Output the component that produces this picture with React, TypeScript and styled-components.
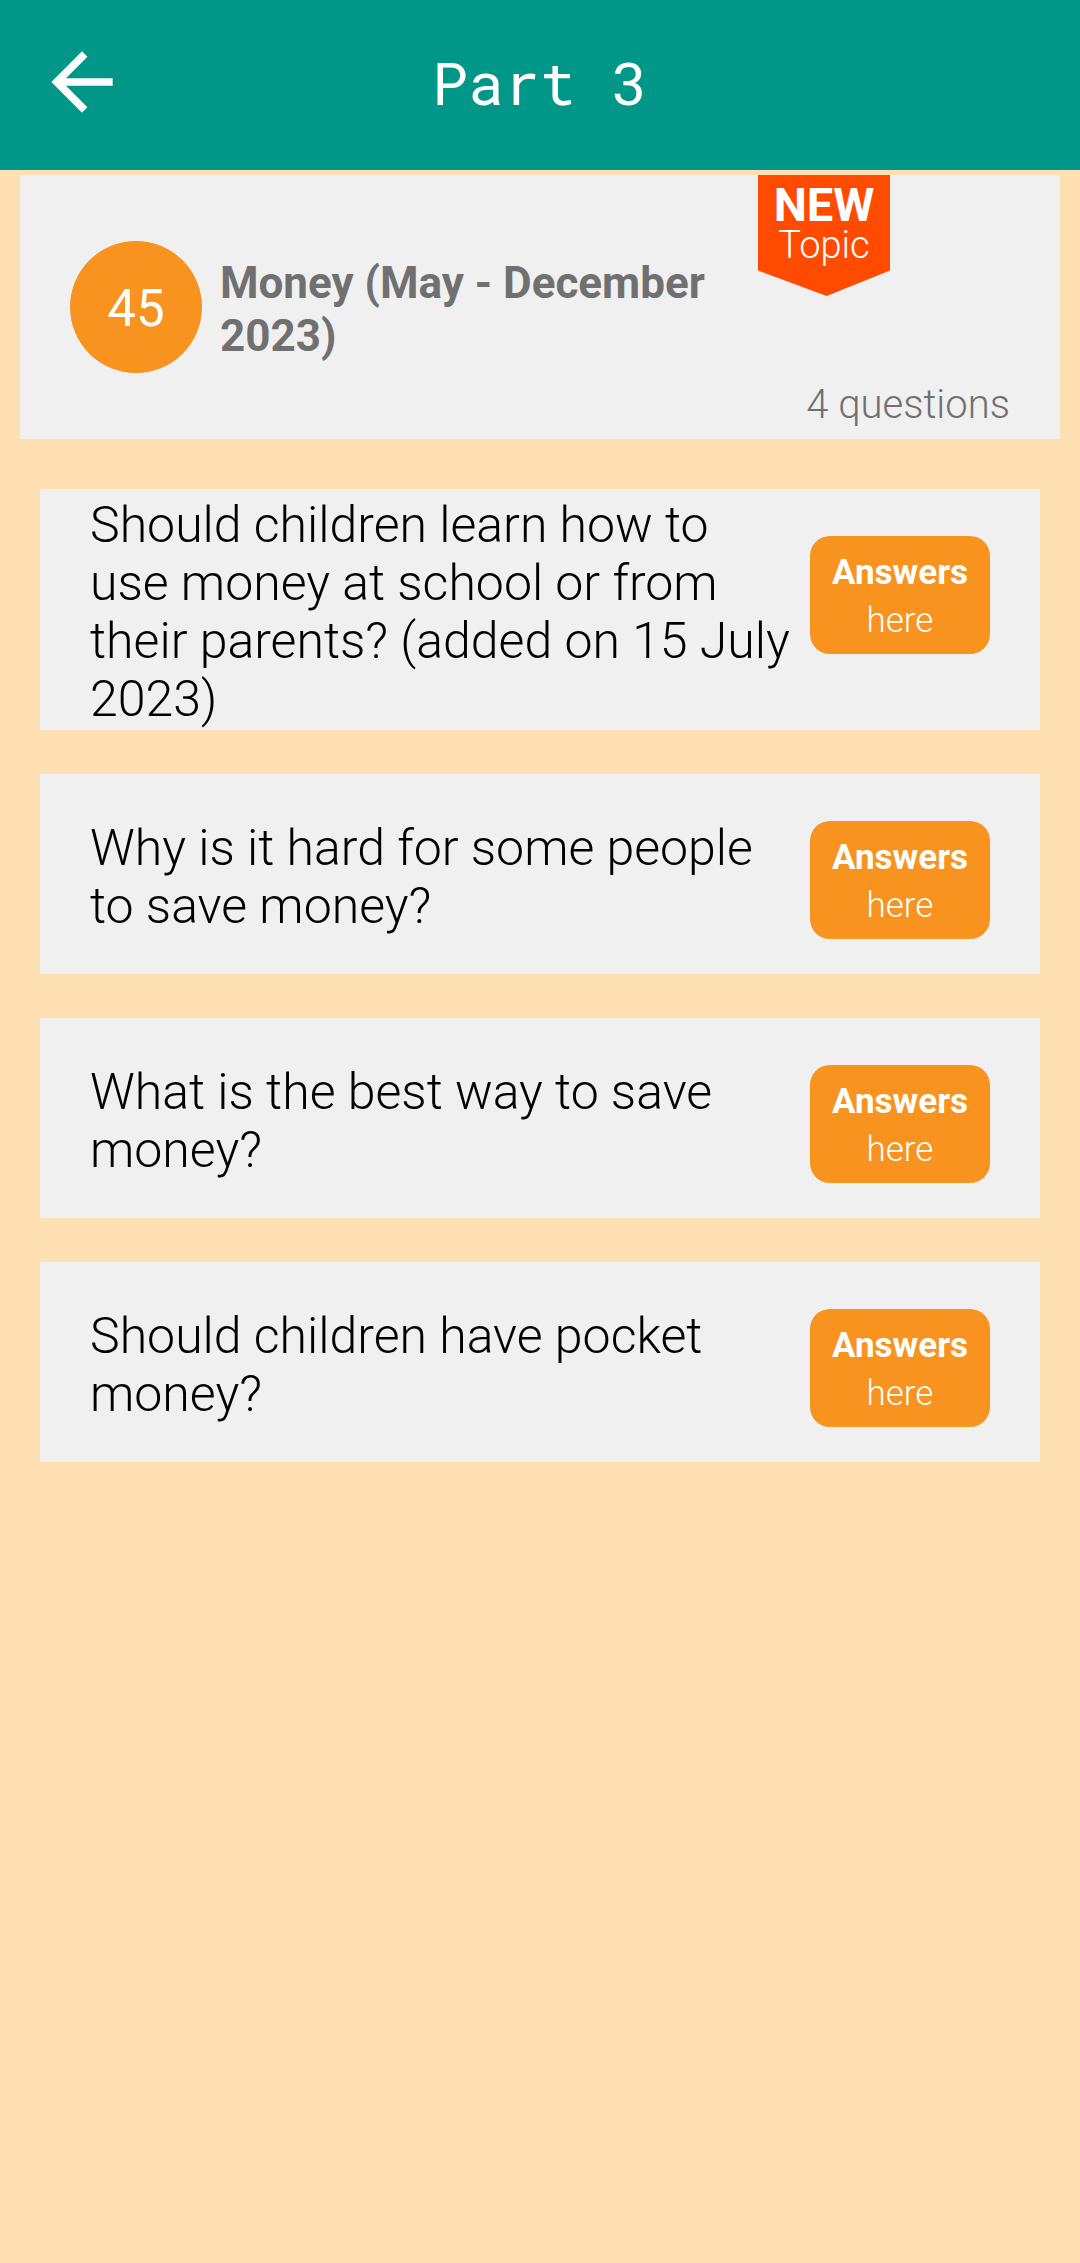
import React from "react";
import styled, { createGlobalStyle } from "styled-components";

const Global = createGlobalStyle`
  * { box-sizing: border-box; }
  html { background: #ffe0b2; }
  body { margin: 0; background: #ffe0b2; font-family: Roboto, sans-serif; }
`;
const Page = styled.div`
  display: flex;
  flex-direction: column;
`;
const Header = styled.header`
  display: grid;
  grid-template-columns: 92px 1fr 92px;
  align-items: center;
  height: 170px;
  padding: 0 36px 6px;
  background: #009688;
  color: #fff;
`;
const BackButton = styled.button`
  display: flex;
  padding: 0;
  border: 0;
  background: none;
  color: inherit;
`;
const Title = styled.h1`
  margin: 0;
  text-align: center;
  font: 400 60px/76px "Roboto Mono", "DejaVu Sans Mono", monospace;
`;
const Topic = styled.section`
  position: relative;
  display: flex;
  flex-direction: column;
  justify-content: flex-end;
  gap: 8px;
  min-height: 264px;
  margin: 5px 20px 0;
  padding: 0 50px 10px;
  background: #f0f0f0;
`;
const TopicRow = styled.div`
  display: flex;
  align-items: center;
  gap: 18px;
`;
const Count = styled.div`
  display: grid;
  place-items: center;
  width: 132px;
  height: 132px;
  padding-top: 3px;
  border-radius: 50%;
  background: #f7931e;
  color: #fff;
  font-size: 51px;
`;
const TopicName = styled.h2`
  margin: 0;
  padding-top: 6px;
  max-width: 520px;
  color: #707070;
  font-size: 44px;
  line-height: 53px;
  font-weight: 700;
`;
const Total = styled.p`
  margin: 0;
  text-align: right;
  color: #707070;
  font-size: 40px;
  line-height: 48px;
  font-weight: 300;
`;
const Ribbon = styled.div`
  position: absolute;
  top: 0;
  right: 170px;
  width: 132px;
  height: 121px;
  padding-top: 10px;
  background: #ff4b00;
  color: #fff;
  text-align: center;
  font-size: 38px;
  line-height: 40px;
  font-weight: 300;
  clip-path: polygon(0 0, 100% 0, 100% 79%, 52% 100%, 0 79%);
`;
const RibbonStrong = styled.strong`
  display: block;
  font-size: 47px;
  font-weight: 700;
`;
const List = styled.ul`
  display: flex;
  flex-direction: column;
  gap: 44px;
  margin: 50px 40px;
  padding: 0;
  list-style: none;
`;
const Card = styled.li`
  display: flex;
  justify-content: space-between;
  align-items: center;
  min-height: 200px;
  padding: 7px 50px 2px;
  background: #f0f0f0;
`;
const Question = styled.p`
  flex: 1;
  margin: 0;
  color: #000;
  font-size: 50px;
  line-height: 58px;
  font-weight: 300;
`;
const Answer = styled.button`
  align-self: flex-start;
  flex: none;
  width: 180px;
  height: 118px;
  margin: 40px 0 0 15px;
  padding: 4px 0 0;
  border: 0;
  border-radius: 20px;
  background: #f7931e;
  color: #fff;
  font: 300 35px/48px Roboto, sans-serif;
`;
const AnswerStrong = styled.strong`
  display: block;
  font-weight: 700;
`;

const questions = [
  "Should children learn how to use money at school or from their parents? (added on 15 July 2023)",
  "Why is it hard for some people to save money?",
  "What is the best way to save money?",
  "Should children have pocket money?",
];

export default function App() {
  return (
    <Page>
      <Global />
      <Header>
        <BackButton aria-label="Back">
          <svg width="92" height="92" viewBox="0 0 24 24" fill="currentColor">
            <path d="M20 11H7.83l5.59-5.59L12 4l-8 8 8 8 1.41-1.41L7.83 13H20v-2z" />
          </svg>
        </BackButton>
        <Title>Part 3</Title>
      </Header>
      <main>
        <Topic>
          <TopicRow>
            <Count>45</Count>
            <TopicName>Money (May - December 2023)</TopicName>
          </TopicRow>
          <Total>4 questions</Total>
          <Ribbon>
            <RibbonStrong>NEW</RibbonStrong>
            Topic
          </Ribbon>
        </Topic>
        <List>
          {questions.map((q) => (
            <Card key={q}>
              <Question>{q}</Question>
              <Answer>
                <AnswerStrong>Answers</AnswerStrong>
                here
              </Answer>
            </Card>
          ))}
        </List>
      </main>
    </Page>
  );
}
